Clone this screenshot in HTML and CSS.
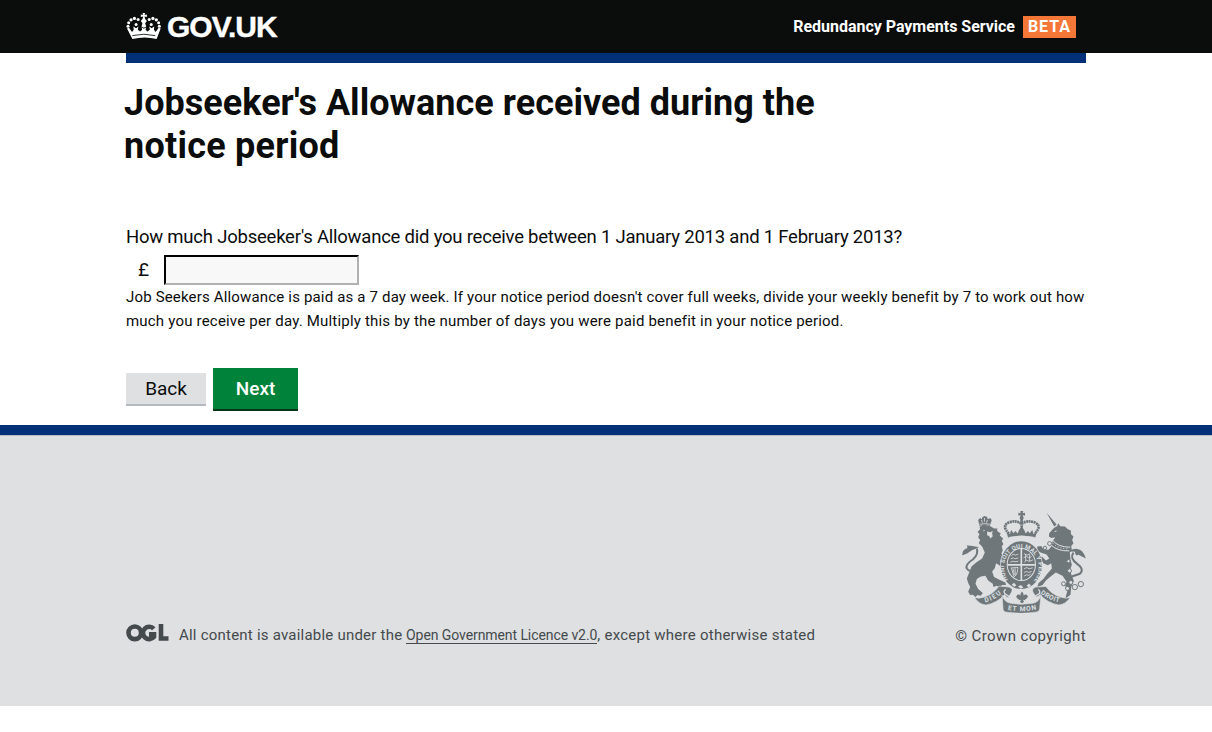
FILE: index.html
```html
<!DOCTYPE html>
<html lang="en">
<head>
<meta charset="utf-8">
<title>Jobseeker's Allowance received during the notice period</title>
<link rel="stylesheet" href="styles.css">
</head>
<body>
<header class="header">
  <div class="wrap header-inner">
    <a class="logo">
      <svg class="crown" viewBox="30 38 104 80" aria-hidden="true">
        <g fill="#fff">
          <path d="M79 38h8l-2 6 7-2v8l-7-2 2 8 5 6-5 6 3 10-7 4-7-4 3-10-5-6 5-6 2-8-7 2v-8l7 2z"/>
          <circle cx="36" cy="77" r="4.5"/><circle cx="38" cy="67" r="4.5"/><circle cx="45" cy="58" r="4.8"/><circle cx="55" cy="54" r="4.8"/><circle cx="66" cy="57" r="4.5"/>
          <circle cx="129" cy="77" r="4.5"/><circle cx="127" cy="67" r="4.5"/><circle cx="120" cy="58" r="4.8"/><circle cx="110" cy="54" r="4.8"/><circle cx="99" cy="57" r="4.5"/>
          <circle cx="60" cy="72" r="4.5"/><circle cx="105" cy="72" r="4.5"/>
          <path d="M33 84l6-2 9 12 5-6-1-10 8 5 7-5-2 10 7 5 6-5-2-8 7 5 7-5-2 8 6 5 7-5-2-10 7 5 8-5-1 10 5 6 9-12 6 2-12 31q-36-9-72 0z"/>
        </g>
        <path d="M49 105q34-8 68 0" fill="none" stroke="#0b0c0c" stroke-width="2.5"/>
      </svg>
      <span class="logo-text">GOV.UK</span>
    </a>
    <div class="service"><span class="service-name">Redundancy Payments Service</span><span class="beta">BETA</span></div>
  </div>
</header>
<div class="wrap bar"></div>
<main class="wrap main">
  <h1><span class="h1-a">Jobseeker's Allowance received during the</span><br><span class="h1-b">notice period</span></h1>
  <label class="question" for="amount">How much Jobseeker's Allowance did you receive between 1 January 2013 and 1 February 2013?</label>
  <div class="field"><span class="pound">£</span><input id="amount" class="amount" type="text"></div>
  <p class="hint"><span class="hint-a">Job Seekers Allowance is paid as a 7 day week. If your notice period doesn't cover full weeks, divide your weekly benefit by 7 to work out how</span><br><span class="hint-b">much you receive per day. Multiply this by the number of days you were paid benefit in your notice period.</span></p>
  <div class="actions"><button class="back">Back</button><button class="next">Next</button></div>
</main>
<footer class="footer">
  <div class="wrap footer-inner">
    <div class="licence">
      <svg class="ogl" viewBox="0 0 43 18" aria-hidden="true">
        <g fill="none" stroke="#454a4c" stroke-width="4.600"><circle cx="8.800" cy="8.800" r="6.300"/><path d="M27.800 4.800A6.200 6.200 0 1 0 28 12.800V10.400h-5"/><path d="M35 0V14.500H42.500"/></g>
      </svg>
      <p class="licence-text"><span class="l1">All content is available under the</span> <a class="link">Open Government Licence v2.0</a><span class="l2">, except where otherwise stated</span></p>
    </div>
    <div class="copyright">
      <svg class="arms" viewBox="33 33 375 307" aria-hidden="true">
        <defs>
          <path id="garter" d="M174 240A52 58 0 1 1 254 240"/>
          <path id="dieu" d="M105 308Q135 301 159 277"/>
          <path id="motto" d="M173 330Q216 339 262 329"/>
          <path id="droit" d="M271 281Q298 302 330 308"/>
        </defs>
        <g fill="#6f777b">
          <!-- central crown -->
          <path d="M211 33h9l-2 7 7-2v9l-7-2 3 9-3 8h-6l-3-8 3-9-7 2v-9l7 2z"/>
          <path d="M174 113L170 98l10 4 3-12 8 10 5-7 7 8 4-10 8-13 8 13 4 10 7-8 5 7 8-10 3 12 10-4-4 15q-41-11-82 0z"/>
        </g>
        <g fill="none" stroke="#6f777b" stroke-width="8" stroke-dasharray="6 1.500"><path d="M177 101Q154 79 175 68Q198 59 214 72Q232 59 256 68Q277 79 254 101M215 61v27"/></g>
        <path d="M178 112q37-8 75 0" fill="none" stroke="#dee0e2" stroke-width="2"/>
        <!-- lion -->
        <g fill="#6f777b">
          <path d="M88 78l-4-18 6-6 5 4 2-7 7-3 7 3 2 7 7-4 5 6-6 18q-15-5-31 0z"/>
          <path d="M88 81L100 74L121 79L132 86L142 86L141 93L152 101L149 107L159 116L155 123L160 132L155 140L158 152L154 160L166 180L160 190L168 206L158 212L148 196L138 190L134 205L126 215L132 232L148 240L166 248L168 256L156 256L150 263L140 258L130 262L128 252L114 242L106 228L92 230L80 238L76 252L84 268L98 280L92 288L82 286L76 292L68 285L60 286L54 276L60 262L54 250L50 236L58 216L64 200L78 188L96 176L104 158L96 140L86 130L90 120L84 112L88 102L82 96L90 88Z"/>
          <path d="M36 165q0-17 16-21l-2-7q24 1 36 6l-21 8-13 9q-9 4-16 6z"/>
        </g>
        <path d="M80 146Q86 163 68 179Q44 194 50 206Q57 217 68 211" fill="none" stroke="#6f777b" stroke-width="6"/>
        <path d="M88 73q17-4 31 0M94 60l3 8M103 54v11M112 60l-3 8" fill="none" stroke="#dee0e2" stroke-width="2.500"/>
        <path d="M111 95l9 2 8-4-2 8 2 8-7 7-4-8-6-2zM99 90l6 2-4 3z" fill="#dee0e2"/>
        <!-- unicorn -->
        <g fill="#6f777b">
          <path d="M290 38L320 74L313 80Z"/>
          <path d="M298 100L312 84L322 78L325 70L331 79L345 80L354 88L363 92L363 102L371 110L367 120L371 130L364 138L366 150L360 158L362 180L366 195L360 212L366 228L372 244L364 262L362 285L346 297L352 275L346 258L350 246L338 228L318 218L305 228L288 242L278 256L262 262L266 250L280 238L292 222L306 206L304 190L294 196L280 190L270 174L276 170L288 182L298 176L290 164L272 158L262 152L262 140L274 138L280 148L296 150L304 140L308 124L316 112L304 114L297 110Z"/>
          <path d="M360 156q6-10 22-9 18 1 26 29l-22-11-7 2-5-12z"/>
        </g>
        <path d="M371 158Q358 175 382 192Q405 208 390 222L366 230" fill="none" stroke="#6f777b" stroke-width="6"/>
        <path d="M309 122q16 20 52 20M304 136q19 18 54 17" fill="none" stroke="#dee0e2" stroke-width="3"/>
        <path d="M309 130q15 17 48 17" fill="none" stroke="#dee0e2" stroke-width="3" stroke-dasharray="3 6"/>
        <path d="M314 95l6-2" stroke="#dee0e2" stroke-width="3"/>
        <g fill="#dee0e2" stroke="#6f777b" stroke-width="3"><circle cx="299" cy="131" r="6"/><circle cx="285" cy="144" r="5"/><circle cx="356" cy="184" r="5"/><circle cx="359" cy="213" r="6"/><circle cx="341" cy="252" r="6"/><circle cx="353" cy="266" r="6"/><circle cx="363" cy="248" r="6"/><circle cx="375" cy="262" r="8"/><circle cx="393" cy="253" r="8"/></g>
        <!-- shield inside the garter -->
        <ellipse cx="214" cy="196" rx="64" ry="74" fill="#dee0e2"/>
        <ellipse cx="214" cy="196" rx="62" ry="72" fill="#6f777b"/>
        <ellipse cx="214" cy="194" rx="44" ry="50" fill="#dee0e2"/>
        <ellipse cx="214" cy="194" rx="41" ry="47" fill="#6f777b"/>
        <path d="M214 147v94M173 195h82" stroke="#dee0e2" stroke-width="5"/>
        <g fill="none" stroke="#dee0e2" stroke-width="2.500"><path d="M184 167l7-4 5 3 9-3M182 177l8-3 5 3 10-3M181 187l8-3 6 2 10-2M222 161l9 5 9-4M221 174l8-5 7 5 9-4M223 187l7-6 8 4 11-5M227 163v21M239 163v21M184 204l20-1-4 21-8 7zM189 206l4 20M195 205l1 20M222 207l9-4 6 4 11-3M222 218l8-3 6 3 9-3M222 229l8-4 6 2 6-4"/></g>
        <text class="arms-text garter-text"><textPath href="#garter" textLength="256">HONI SOIT QUI MAL Y PENSE</textPath></text>
        <path d="M185 255l7-6 7 8-6 4zM204 260l9-4 7 7-8 4zM230 258l7-7 6 6-7 6z" fill="#dee0e2"/>
        <!-- motto ribbon and fleur -->
        <g fill="#6f777b" stroke="#dee0e2" stroke-width="2">
          <path d="M73 293q14 5 29-1 26-7 45-33l30 3q15 5 6 18l-8 13q-9-1-11-9-22 26-57 32-22-3-34-23z"/>
          <path d="M361 293q-14 5-29-1-26-7-44-32l-31 2q-14 5-7 17l8 13q9-1 12-8 22 26 57 32 22-3 34-23z"/>
          <path d="M156 286q7 23 28 25 32 5 63 0 21-3 26-25l-4 43q-1 7-8 8-46 9-95 0-7-2-7-8z"/>
        </g>
        <path d="M167 269q-9 6-2 13l14 9M265 269q8 6 2 13l-14 9" fill="none" stroke="#dee0e2" stroke-width="4"/>
        <path d="M190 271h50l-6 38q-18 3-37 0z" fill="#dee0e2"/>
        <path d="M216 275q-8 8-3 19-2-13-11-9-8 9 5 14l-2 3 8-2-3 7 6 4 6-4-3-7 8 2-2-3q13-5 6-14-10-4-12 9 5-11-3-19z" fill="#6f777b"/>
        <text class="arms-text"><textPath href="#dieu" textLength="56">DIEU</textPath></text>
        <text class="arms-text"><textPath href="#motto" textLength="87">ET MON</textPath></text>
        <text class="arms-text"><textPath href="#droit" textLength="63">DROIT</textPath></text>
      </svg>
      <span class="copyright-text">© Crown copyright</span>
    </div>
  </div>
</footer>
</body>
</html>
```
FILE: styles.css
```css
* { box-sizing: border-box; }
body { margin: 0; background: #fff; color: #0b0c0c; font-family: Roboto, "Liberation Sans", sans-serif; }
.wrap { width: 960px; margin: 0 auto; }
.header { height: 53px; background: #0b0c0c; color: #fff; }
.header-inner { display: flex; justify-content: space-between; height: 53px; }
.logo { display: flex; align-items: flex-start; padding-top: 13px; }
.crown { width: 35px; height: 27px; flex: none; }
.logo-text { margin: -1px 0 0 6px; font: bold 30px/30px "Liberation Sans", Arial, sans-serif; letter-spacing: -1px; white-space: nowrap; -webkit-text-stroke: 0.4px #fff; }
.service { display: flex; align-items: flex-start; padding: 16px 10px 0 0; font-weight: 700; font-size: 16px; line-height: 22px; white-space: nowrap; }
.service-name { letter-spacing: -0.02px; }
.beta { width: 53px; height: 22px; margin-left: 8px; background: #f47738; text-align: center; letter-spacing: 1px; }
.bar { height: 10px; background: #003078; }
.main { height: 362px; padding-top: 19px; white-space: nowrap; }
h1 { margin: 0 0 0 -2px; font-size: 36px; line-height: 43px; font-weight: 700; }
.h1-a { letter-spacing: 0.03px; }
.h1-b { letter-spacing: 0.25px; }
.question { display: block; margin-top: 56px; font-size: 18.5px; line-height: 26px; letter-spacing: -0.22px; }
.field { display: flex; margin-top: 5px; height: 30px; }
.pound { width: 38px; padding-left: 12px; font-size: 19px; line-height: 29px; }
.amount { width: 195px; height: 30px; border: 2px solid; border-color: #000 #b1b1b1 #b1b1b1 #000; background: #f8f8f8; padding: 2px 4px; font-size: 19px; }
.hint { margin: 0; font-size: 15px; line-height: 24px; }
.hint-a { letter-spacing: 0.168px; }
.hint-b { letter-spacing: 0.195px; }
.actions { display: flex; align-items: center; margin-top: 35px; gap: 7px; }
button { font-family: inherit; border: 0; border-radius: 0; padding: 0; color: #0b0c0c; font-size: 19px; }
.back { width: 80px; height: 33px; background: #dee0e2; border-bottom: 2px solid #b3b9bf; }
.next { width: 85px; height: 43px; background: #00823b; color: #fff; border-bottom: 2px solid #003618; font-weight: 500; }
.footer { height: 281px; background: #dee0e2; border-top: 10px solid #003078; box-shadow: inset 0 1px #b5bdc2; color: #454a4c; }
.footer-inner { display: flex; justify-content: space-between; padding-top: 76px; white-space: nowrap; }
.licence { display: flex; padding-top: 112px; }
.ogl { width: 43px; height: 18px; margin-top: 1px; }
.licence-text { margin: 0 0 0 10px; font-size: 15px; line-height: 24px; }
.l1 { letter-spacing: 0.22px; }
.l2 { letter-spacing: 0.25px; }
.link { font-size: 14px; letter-spacing: -0.08px; border-bottom: 1px solid #454a4c; }
.copyright { display: flex; flex-direction: column; align-items: flex-end; }
.arms { width: 125px; height: 102px; }
.arms-text { font: bold 20px Roboto, sans-serif; fill: #dee0e2; }
.garter-text { font-size: 18px; }
.copyright-text { margin-top: 11px; font-size: 15px; line-height: 24px; letter-spacing: 0.38px; }
```
